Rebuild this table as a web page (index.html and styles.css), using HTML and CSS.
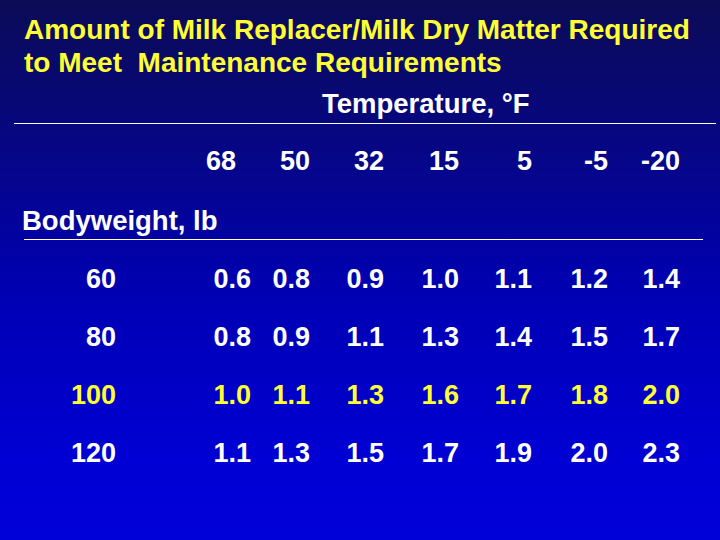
FILE: index.html
```html
<!DOCTYPE html>
<html>
<head>
<meta charset="utf-8">
<link rel="stylesheet" href="styles.css">
</head>
<body>
<div class="slide">
  <h1 class="title">Amount of Milk Replacer/Milk Dry Matter Required<br>to Meet&nbsp; Maintenance Requirements</h1>
  <div class="temp">Temperature, °F</div>
  <div class="rule rule-top"></div>
  <div class="grid head">
    <span></span>
    <span class="first">68</span><span>50</span><span>32</span><span>15</span><span>5</span><span>-5</span><span>-20</span>
  </div>
  <div class="bw">Bodyweight, lb</div>
  <div class="rule rule-bw"></div>
  <div class="rows">
    <div class="grid row"><span>60</span><span>0.6</span><span>0.8</span><span>0.9</span><span>1.0</span><span>1.1</span><span>1.2</span><span>1.4</span></div>
    <div class="grid row"><span>80</span><span>0.8</span><span>0.9</span><span>1.1</span><span>1.3</span><span>1.4</span><span>1.5</span><span>1.7</span></div>
    <div class="grid row hl"><span>100</span><span>1.0</span><span>1.1</span><span>1.3</span><span>1.6</span><span>1.7</span><span>1.8</span><span>2.0</span></div>
    <div class="grid row"><span>120</span><span>1.1</span><span>1.3</span><span>1.5</span><span>1.7</span><span>1.9</span><span>2.0</span><span>2.3</span></div>
  </div>
</div>
</body>
</html>
```

FILE: styles.css
```css
html, body {
  margin: 0;
  padding: 0;
}
.slide {
  width: 720px;
  height: 540px;
  overflow: hidden;
  background: linear-gradient(to bottom, #0b0b56 0%, #06068a 30%, #0000b4 55%, #0000d4 85%, #0000d8 100%);
  font-family: "Liberation Sans", Arial, sans-serif;
  font-weight: bold;
  font-size: 27px;
  line-height: 33px;
  color: #ffffff;
}
.title {
  margin: 0;
  padding: 13px 0 0 24px;
  font-size: 28px;
  line-height: 33px;
  font-weight: bold;
  color: #ffff33;
}
.temp {
  margin-top: 8px;
  padding-left: 322px;
  font-size: 27.5px;
}
.rule {
  border-top: 1px solid #ffffff;
  height: 0;
}
.rule-top {
  margin: 3px 4px 0 14px;
}
.grid {
  display: grid;
  grid-template-columns: 116px 135px 59px 74px 75px 73px 76px 72px;
  justify-items: end;
  align-items: center;
}
.head {
  margin-top: 21px;
}
.head .first {
  padding-right: 15px;
}
.bw {
  margin-top: 26px;
  padding-left: 22px;
  font-size: 27.5px;
}
.rule-bw {
  margin: 2px 17px 0 24px;
}
.rows {
  margin-top: 10px;
}
.row {
  height: 58px;
}
.hl {
  color: #ffff33;
}
```
